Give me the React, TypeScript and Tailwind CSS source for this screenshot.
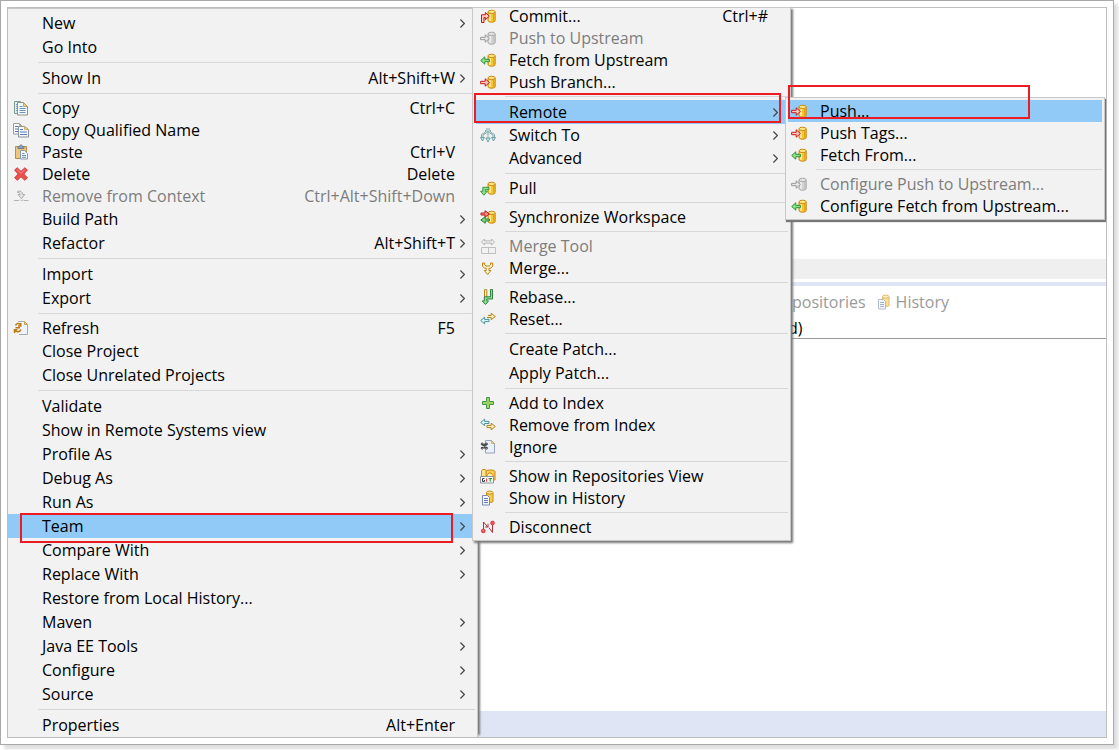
import React from "react";

interface Item {
  label: string;
  icon?: React.ReactNode;
  shortcut?: string;
  submenu?: boolean;
  disabled?: boolean;
  selected?: boolean;
  trimmed?: boolean;
}

type Entry = Item | "separator";

interface MenuProps {
  label: string;
  entries: Entry[];
  gutter: string;
  className: string;
}

const Icon = ({ children }: { children: React.ReactNode }) => (
  <svg viewBox="0 0 16 16" className="w-4 h-4 shrink-0" fill="none" aria-hidden="true">
    {children}
  </svg>
);

const Cylinder = ({ gray = false }: { gray?: boolean }) => (
  <g>
    <path
      d="M8 4.2v8.2c0 2.4 7.2 2.4 7.2 0V4.2z"
      fill={gray ? "#d4d4d4" : "#f7c434"}
      stroke={gray ? "#a8a8a8" : "#c98a12"}
    />
    <path d="M10 5.5v7.5" stroke={gray ? "#efefef" : "#fff0a0"} strokeWidth="1.6" />
    <path d="M13.8 5v7.8" stroke={gray ? "#bdbdbd" : "#e39d12"} strokeWidth="1.2" />
    <ellipse
      cx="11.6"
      cy="3.9"
      rx="3.6"
      ry="1.7"
      fill={gray ? "#e4e4e4" : "#ffe680"}
      stroke={gray ? "#a8a8a8" : "#c98a12"}
    />
  </g>
);

const PushIcon = ({ gray = false }: { gray?: boolean }) => (
  <Icon>
    <Cylinder gray={gray} />
    <path
      d="M.6 7.3h4.6V4.8L9.4 8.5l-4.2 3.7V9.7H.6z"
      fill={gray ? "#e6e6e6" : "#ffc9c2"}
      stroke={gray ? "#999" : "#cc1a1a"}
    />
  </Icon>
);

const FetchIcon = () => (
  <Icon>
    <Cylinder />
    <path d="M9.4 7.3H4.8V4.8L.7 8.5l4.1 3.7V9.7h4.6z" fill="#8fe08a" stroke="#2e8f3a" />
  </Icon>
);

const CommitIcon = () => (
  <Icon>
    <Cylinder />
    <path d="M1.5 14.5V6.8h3.8V4.5l4 3.6-4 3.7V9.4H4v5.1z" fill="#ffd0c8" stroke="#b81818" />
  </Icon>
);

const PullIcon = () => (
  <Icon>
    <Cylinder />
    <path d="M9 7.3H2.8v4H.6l3.3 3.9 3.4-3.9H5.4V9.7H9z" fill="#8fe08a" stroke="#2e8f3a" strokeWidth=".9" />
  </Icon>
);

const SyncIcon = () => (
  <Icon>
    <Cylinder />
    <path d="M1 4h4V1.7L9.4 5 5 8.2V6H1z" fill="#f88" stroke="#c01616" />
    <path d="M9.4 10H5.2V7.8L.8 11l4.4 3.3V12h4.2z" fill="#7ed67a" stroke="#2b8235" />
  </Icon>
);

const SwitchIcon = () => (
  <Icon>
    <path
      d="M7 1v4.5L3 8v3M9 1v4.5L13 8v3M8 4v8M5.5 3v2L1.5 7.5V11M10.5 3v2l4 2.5V11"
      stroke="#6f9fa6"
      strokeWidth=".9"
    />
    <path d="M.5 10.5h4L2.5 14zM11.5 10.5h4l-2 3.5zM5.8 11h4.4L8 15z" fill="#b9e6ec" stroke="#5f929a" strokeWidth=".8" />
  </Icon>
);

const MergeToolIcon = () => (
  <Icon>
    <path d="M1.5 4 4.5 1v1.9h7V1l3 3-3 3V5.1h-7V7z" stroke="#b4b4b4" />
    <path d="M1.5 9.5h14v6h-14zM8.5 9.5v6" stroke="#bfbfbf" />
  </Icon>
);

const MergeIcon = () => (
  <Icon>
    <path
      d="M2.5 3v3.2l2 2h1.7v2.3H4.3l3.3 4 3.3-4H9V8.2h1.7l2-2V3h-2.2v1.8L9.2 6H6L4.7 4.8V3z"
      fill="#fff3c4"
      stroke="#b98418"
    />
  </Icon>
);

const RebaseIcon = () => (
  <Icon>
    <path d="M4.5 8V.7h2.3V8" fill="#fff3c4" stroke="#b98418" />
    <path d="M10.5.5h2V10H6.8v1.9h1.8l-3.2 3.6-3.2-3.6h2.1V7.8h6.2z" fill="#8fdc8c" stroke="#2e8540" />
  </Icon>
);

const ResetIcon = () => (
  <Icon>
    <path d="M8 4.4h3.2V2.2l4.1 3.3-4.1 3.2V6.6H7" fill="#fff3c4" stroke="#b67c17" />
    <path d="M9 8.4H4.6V6.2L.7 9.5l3.9 3.3v-2.2H9z" fill="#d8f5f7" stroke="#4c929b" />
  </Icon>
);

const UnstageIcon = () => (
  <Icon>
    <path d="M9 4.4H4.6V2.2L.7 5.4l3.9 3.2V6.5H9z" fill="#d8f5f7" stroke="#4c929b" />
    <path d="M7 8.4h4.2V6.2l4.1 3.3-4.1 3.3v-2.2H7z" fill="#fff3c4" stroke="#b67c17" />
  </Icon>
);

const AddIcon = () => (
  <Icon>
    <path d="M6.500 2.500h3v4h4v3h-4v4h-3v-4h-4v-3h4z" fill="#9fd45f" stroke="#46944f" />
  </Icon>
);

const IgnoreIcon = () => (
  <Icon>
    <path d="M5.5 1.5h6l3 3V14h-9z" fill="#e9f1fc" stroke="#97a3b8" />
    <path d="M11.5 1.5v3h3z" fill="#f0d58c" stroke="#c5a65a" strokeWidth=".8" />
    <path d="m1.5 5 5.5 4M7 5 1.5 9M4.3 4.5v5" stroke="#444" strokeWidth="1.3" />
    <circle cx="2.2" cy="5" r="1" stroke="#444" />
    <circle cx="6.5" cy="5" r="1" stroke="#444" />
    <circle cx="2.2" cy="9.2" r="1" stroke="#444" />
    <circle cx="6.5" cy="9.2" r="1" stroke="#444" />
  </Icon>
);

const RepositoriesIcon = () => (
  <Icon>
    <path d="M1.5 9V3l1-1.5h3l1 1.5h1v6z" fill="#fbe08e" stroke="#c88b1c" />
    <path d="M6 9V3.5c0-2 9-2 9 0V12H6z" fill="#fbcf50" stroke="#c4861a" />
    <path d="M7 8c0-4 6-4 6 0" stroke="#c4861a" fill="#fff0b0" />
    <path d="M.5 8.5h13V15H.5z" fill="#fff" stroke="#8a939d" />
    <path d="M4.5 10.6h-2v2.8h2V12" stroke="#333" />
    <path d="M6.7 10.2v3.6" stroke="#d33" />
    <path d="M8.5 10.6H12M10.2 10.6v3.2" stroke="#258a3b" />
  </Icon>
);

const HistoryIcon = () => (
  <Icon>
    <path d="M6.5 3v8.5c0 1.2 6.5 1.2 6.5 0V3z" fill="#f9cc4b" stroke="#c98a12" />
    <ellipse cx="9.7" cy="2.6" rx="3.3" ry="1.5" fill="#ffeaa0" stroke="#c98a12" />
    <path d="M2.5 5.5h5l2 2V15h-7z" fill="#f4f8ff" stroke="#7b8bb0" />
    <path d="M4 8.5h4M4 10.5h4M4 12.5h4" stroke="#5d78b8" />
  </Icon>
);

const DisconnectIcon = () => (
  <Icon>
    <path d="M3.5 10V3l4.3 5M8 4.8V8H5M12.5 6v7.5l-3.7-5" stroke="#b03040" />
    <circle cx="3.3" cy="11.9" r="1.9" fill="#f25a60" stroke="#d0303c" strokeWidth=".8" />
    <circle cx="12.5" cy="4" r="1.9" fill="#f25a60" stroke="#d0303c" strokeWidth=".8" />
  </Icon>
);

const CopyIcon = () => (
  <Icon>
    <path d="M1.5 1.5h6l2 2v10h-8z" fill="#dff0f0" stroke="#7f9a94" />
    <path d="M3 4.5h2M3 6.5h2M3 8.5h2M3 10.5h2" stroke="#7fa0b8" />
    <path d="M4.5 2.5h6l4 4V15h-10z" fill="#f3faff" stroke="#8c9484" />
    <path d="M10.5 2.5v4h4z" fill="#e8cf86" stroke="#b89b50" strokeWidth=".8" />
    <path d="M6.5 6.5h3M6.5 8.5h6M6.5 10.5h6M6.5 12.5h6" stroke="#6a93c0" />
  </Icon>
);

const CopyNameIcon = () => (
  <Icon>
    <path d="M.5 1.5h6l2 2V12h-8z" fill="#f3f8ff" stroke="#9a9f9c" />
    <path d="M6.5 1.5v2h2" stroke="#c4a355" />
    <path d="M2 4.5h3M2 7h5M2 9.5h3" stroke="#5b7cb8" />
    <path d="M5.5 4.5h6l4 3V15h-10z" fill="#f3f8ff" stroke="#8e9499" />
    <path d="M11.5 4.5v3h4z" fill="#eed896" stroke="#c4a355" strokeWidth=".8" />
    <path d="M7 7.5h3M7 10h7M7 12.5h7" stroke="#5b7cb8" />
  </Icon>
);

const PasteIcon = () => (
  <Icon>
    <path d="M2.5 2.5h11v12h-11z" fill="#f0c57b" stroke="#bd8f46" />
    <path d="M5 4.5v-2h1.5c0-2 3-2 3 0H11v2z" fill="#8fa0bd" stroke="#6c7b98" />
    <path d="M7.5 6.5h4l3 3V15h-7z" fill="#f2f8ff" stroke="#849ab0" />
    <path d="M9 9.5h2.5M9 11.5h4M9 13.3h4" stroke="#6f93bd" />
  </Icon>
);

const DeleteIcon = () => (
  <Icon>
    <path
      d="M4.2 1.8 8 5.4l3.8-3.6L14.4 4l-3.6 4 3.6 3.8-2.6 2.5L8 10.700l-3.8 3.600-2.6-2.500L5.200 8 1.600 4z"
      fill="#ee4f4c"
      stroke="#d13d3d"
      strokeLinejoin="round"
    />
    <path d="m4 3.5 4 3.7 4-3.7" stroke="#f88b84" />
  </Icon>
);

const RemoveContextIcon = () => (
  <Icon>
    <path d="M4 4.2C6 2 9.5 3 9.8 6.5h2l-3.3 4.1L5 6.5h2C7 5 6 4.2 4 4.2z" fill="#e4e4e4" stroke="#aaa" />
    <path d="M1 12.5h5M10.5 12.5h5M7 11.5 8.5 13l1.5-1.5" stroke="#b2b2b2" />
  </Icon>
);

const RefreshIcon = () => (
  <Icon>
    <path d="M5 1.5h6.5l3 3v10H6" fill="#edf4ff" stroke="#a8abb0" />
    <path d="M11.5 1.5v3h3z" fill="#efd48b" stroke="#c9a452" />
    <path
      d="M2.5 5.5C3.5 3 6.500 3 7.500 5.200M7.800 3v3H5M8 9.500C7 12.500 3 12.500 2 10M1.500 13V9.800h3M2.500 7.700H7"
      stroke="#bd7c11"
      strokeWidth="1.5"
    />
  </Icon>
);

const Chevron = () => (
  <svg viewBox="0 0 5 9" className="w-[5px] h-[9px]" fill="none" aria-hidden="true">
    <path d="m.4.5 4 4-4 4" stroke="#444" strokeWidth="1.2" />
  </svg>
);

const mainEntries: Entry[] = [
  { label: "New", submenu: true },
  { label: "Go Into" },
  "separator",
  { label: "Show In", shortcut: "Alt+Shift+W", submenu: true },
  "separator",
  { label: "Copy", shortcut: "Ctrl+C", icon: <CopyIcon /> },
  { label: "Copy Qualified Name", icon: <CopyNameIcon /> },
  { label: "Paste", shortcut: "Ctrl+V", icon: <PasteIcon /> },
  { label: "Delete", shortcut: "Delete", icon: <DeleteIcon /> },
  {
    label: "Remove from Context",
    shortcut: "Ctrl+Alt+Shift+Down",
    icon: <RemoveContextIcon />,
    disabled: true,
  },
  { label: "Build Path", submenu: true },
  { label: "Refactor", shortcut: "Alt+Shift+T", submenu: true },
  "separator",
  { label: "Import", submenu: true },
  { label: "Export", submenu: true },
  "separator",
  { label: "Refresh", shortcut: "F5", icon: <RefreshIcon /> },
  { label: "Close Project" },
  { label: "Close Unrelated Projects" },
  "separator",
  { label: "Validate" },
  { label: "Show in Remote Systems view" },
  { label: "Profile As", submenu: true },
  { label: "Debug As", submenu: true },
  { label: "Run As", submenu: true },
  { label: "Team", submenu: true, selected: true },
  { label: "Compare With", submenu: true },
  { label: "Replace With", submenu: true },
  { label: "Restore from Local History..." },
  { label: "Maven", submenu: true },
  { label: "Java EE Tools", submenu: true },
  { label: "Configure", submenu: true },
  { label: "Source", submenu: true },
  "separator",
  { label: "Properties", shortcut: "Alt+Enter" },
];

const teamEntries: Entry[] = [
  { label: "Commit...", shortcut: "Ctrl+#", icon: <CommitIcon />, trimmed: true },
  { label: "Push to Upstream", icon: <PushIcon gray />, disabled: true },
  { label: "Fetch from Upstream", icon: <FetchIcon /> },
  { label: "Push Branch...", icon: <PushIcon /> },
  "separator",
  { label: "Remote", submenu: true, selected: true },
  { label: "Switch To", icon: <SwitchIcon />, submenu: true },
  { label: "Advanced", submenu: true },
  "separator",
  { label: "Pull", icon: <PullIcon /> },
  "separator",
  { label: "Synchronize Workspace", icon: <SyncIcon /> },
  "separator",
  { label: "Merge Tool", icon: <MergeToolIcon />, disabled: true },
  { label: "Merge...", icon: <MergeIcon /> },
  "separator",
  { label: "Rebase...", icon: <RebaseIcon /> },
  { label: "Reset...", icon: <ResetIcon /> },
  "separator",
  { label: "Create Patch..." },
  { label: "Apply Patch..." },
  "separator",
  { label: "Add to Index", icon: <AddIcon /> },
  { label: "Remove from Index", icon: <UnstageIcon /> },
  { label: "Ignore", icon: <IgnoreIcon /> },
  "separator",
  { label: "Show in Repositories View", icon: <RepositoriesIcon /> },
  { label: "Show in History", icon: <HistoryIcon /> },
  "separator",
  { label: "Disconnect", icon: <DisconnectIcon /> },
];

const remoteEntries: Entry[] = [
  { label: "Push...", icon: <PushIcon />, selected: true },
  { label: "Push Tags...", icon: <PushIcon /> },
  { label: "Fetch From...", icon: <FetchIcon /> },
  "separator",
  { label: "Configure Push to Upstream...", icon: <PushIcon gray />, disabled: true },
  { label: "Configure Fetch from Upstream...", icon: <FetchIcon /> },
];

// rows with an icon are a bit shorter than plain ones
const rowSize = (item: Item) => {
  if (item.trimmed) return "items-start h-[19px]";
  return item.icon ? "items-center h-[22px]" : "items-center h-6";
};

const Menu: React.FC<MenuProps> = ({ label, entries, gutter, className }) => (
  <div role="menu" aria-label={label} className={`bg-[#f2f2f2] ${className}`}>
    {entries.map((entry, i) =>
      entry === "separator" ? (
        <div key={i} role="separator" className="flex items-center h-[7px]">
          <span className={`shrink-0 ${gutter}`} />
          <span className="flex-1 -ml-1 h-px bg-[#d7d7d7]" />
        </div>
      ) : (
        <button
          key={i}
          role="menuitem"
          disabled={entry.disabled}
          className={`flex w-full text-left leading-4 whitespace-nowrap ${rowSize(entry)} ${
            entry.selected ? "bg-[#91c9f7]" : ""
          } ${entry.disabled ? "text-[#7d7d7d]" : "text-black"}`}
        >
          <span className={`shrink-0 ${gutter}`}>{entry.icon}</span>
          <span className="flex-1">{entry.label}</span>
          <span>{entry.shortcut}</span>
          <span className="w-5 pl-[5px]">{entry.submenu && <Chevron />}</span>
        </button>
      )
    )}
  </div>
);

const App: React.FC = () => {
  return (
    <div className="bg-white pr-[5px] pb-[5px] font-['Open_Sans',sans-serif] text-[16px] leading-5">
      <div className="border border-[#a9a9a9] bg-white p-[6px] shadow-[4px_4px_3px_#dedede]">
        <div className="relative flex border border-[#bdbdbd]">
          <Menu
            label="Project"
            entries={mainEntries}
            gutter="w-[34px] pl-[5px]"
            className="relative w-[470px] shrink-0 border-t border-r border-[#c8c8c8] pt-[2px] pr-[2px] shadow-[4px_0_2px_-2px_#777]"
          />

          {/* Workbench behind the menus */}
          <div className="flex-1 min-w-0 flex flex-col">
            <div className="h-[251px]" />
            <div className="h-5 bg-[#efefef]" />
            <div className="mt-[3px] h-1 bg-[#dfe5f5]" />
            <div className="flex items-center h-8 pl-[314px] text-[#9a9a9a]">
              <span>positories</span>
              <span className="ml-[10px] mr-1 opacity-60">
                <HistoryIcon />
              </span>
              <span>History</span>
            </div>
            <div className="h-[21px] pl-[310px] border-b border-[#999] text-black">d)</div>
            <div className="flex-1" />
            <div className="h-[26px] bg-[#dfe5f5]" />
          </div>

          <Menu
            label="Team"
            entries={teamEntries}
            gutter="w-[33px] pl-1"
            className="absolute -top-px left-[464px] w-[319px] border border-[#c8c8c8] pb-[2px] pl-[3px] pr-[2px] shadow-[2px_2px_2px_#777]"
          />
          <Menu
            label="Remote"
            entries={remoteEntries}
            gutter="w-8 pl-[3px]"
            className="absolute top-[89px] left-[777px] w-[320px] border border-[#c8c8c8] p-[2px] shadow-[1px_2px_1px_#777]"
          />

          {/* Step highlights */}
          <div className="absolute top-[505px] left-3 w-[433px] h-[30px] border-2 border-[#ed1c24] pointer-events-none" />
          <div className="absolute top-[85px] left-[466px] w-[307px] h-[30px] border-2 border-[#ed1c24] pointer-events-none" />
          <div className="absolute top-[77px] left-[780px] w-[242px] h-[34px] border-2 border-[#ed1c24] pointer-events-none" />
        </div>
      </div>
    </div>
  );
};

export default App;
